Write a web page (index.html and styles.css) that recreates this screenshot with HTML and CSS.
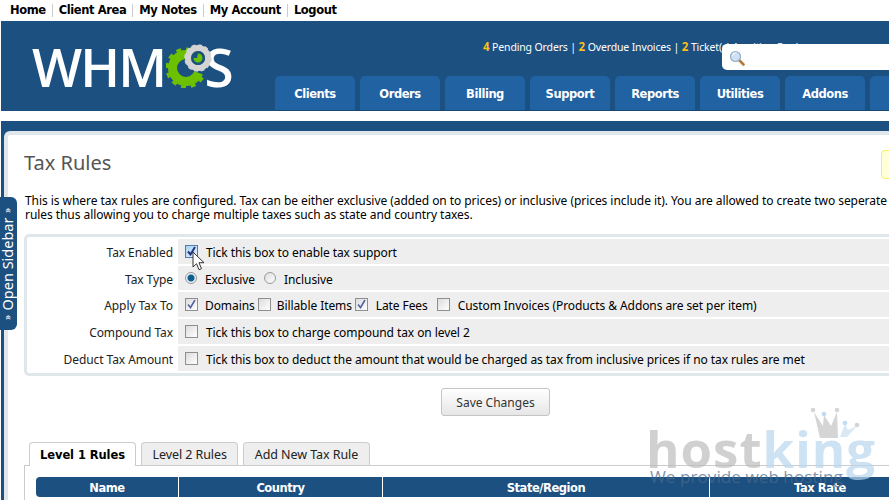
FILE: index.html
```html
<!DOCTYPE html>
<html lang="en">
<head>
<meta charset="utf-8">
<title>Tax Rules</title>
<link rel="stylesheet" href="styles.css">
</head>
<body>
<nav class="topnav">
  <a>Home</a><a>Client Area</a><a>My Notes</a><a>My Account</a><a>Logout</a>
</nav>
<header class="header">
  <div class="logo">
    <span>WHM</span>
    <svg class="gears" width="46" height="44" viewBox="0 0 46 44">
      <defs>
        <clipPath id="gap"><path d="M20 24L46 8V0H-2V46H46V34z"/></clipPath>
      </defs>
      <g clip-path="url(#gap)" fill="none" stroke="#6cc000">
        <circle cx="20" cy="24" r="13.500" stroke-width="9"/>
        <circle cx="20" cy="24" r="18" stroke-width="5" pathLength="120" stroke-dasharray="5 5"/>
      </g>
      <g fill="none">
        <circle cx="32" cy="14" r="10" stroke="#d4d4d4" stroke-width="6"/>
        <circle cx="32" cy="14" r="12" stroke="#d4d4d4" stroke-width="3.500" pathLength="120" stroke-dasharray="6 4"/>
      </g>
      <circle cx="32" cy="14" r="7" fill="#1c5081"/>
      <path fill="#6cc000" d="M27.500 14a4.500 4.500 0 1 0 4.500-4.500l-1 4.500z"/>
    </svg>
    <span>S</span>
  </div>
  <div class="header-main">
    <p class="stats"><b>4</b> Pending Orders | <b>2</b> Overdue Invoices | <b>2</b> Ticket(s) Awaiting Reply</p>
    <ul class="tabs">
      <li>Clients</li><li>Orders</li><li>Billing</li><li>Support</li><li>Reports</li><li>Utilities</li><li>Addons</li><li>Help</li>
    </ul>
  </div>
  <div class="search">
    <svg width="16" height="16" viewBox="0 0 16 16">
      <path d="M10 10l4.500 4.500" stroke="#b5793a" stroke-width="2.600" stroke-linecap="round"/>
      <circle cx="6.500" cy="6.500" r="5" fill="#cfe0f3" stroke="#93aecb" stroke-width="1.200"/>
      <path d="M3.500 6a3 3 0 0 1 3-3" stroke="#fff" fill="none"/>
    </svg>
  </div>
</header>
<div class="strip"></div>
<main class="page">
  <div class="content">
    <div class="title-row">
      <h1>Tax Rules</h1>
      <div class="notice"></div>
    </div>
    <p class="intro">This is where tax rules are configured. Tax can be either exclusive (added on to prices) or inclusive (prices include it). You are allowed to create two seperate levels of tax<br>rules thus allowing you to charge multiple taxes such as state and country taxes.</p>
    <div class="form">
      <div class="row first">
        <div class="label">Tax Enabled</div>
        <div class="field"><span class="cb on"><svg width="11" height="11" viewBox="0 0 11 11"><path d="M2 5.500l2.500 3L9 1" fill="none" stroke="#24337f" stroke-width="2"/></svg></span><span class="text">Tick this box to enable tax support</span></div>
      </div>
      <div class="row short">
        <div class="label">Tax Type</div>
        <div class="field"><span class="radio on"></span><span class="text t-excl">Exclusive</span><span class="radio"></span><span class="text">Inclusive</span></div>
      </div>
      <div class="row">
        <div class="label">Apply Tax To</div>
        <div class="field"><span class="cb"><svg width="11" height="11" viewBox="0 0 11 11"><path d="M2 5.500l2.500 3L9 1" fill="none" stroke="#5763a6" stroke-width="1.600"/></svg></span><span class="text t-dom">Domains</span><span class="cb"></span><span class="text t-bill">Billable Items</span><span class="cb"><svg width="11" height="11" viewBox="0 0 11 11"><path d="M2 5.500l2.500 3L9 1" fill="none" stroke="#5763a6" stroke-width="1.600"/></svg></span><span class="text t-late">Late Fees</span><span class="cb"></span><span class="text">Custom Invoices (Products &amp; Addons are set per item)</span></div>
      </div>
      <div class="row">
        <div class="label">Compound Tax</div>
        <div class="field"><span class="cb"></span><span class="text">Tick this box to charge compound tax on level 2</span></div>
      </div>
      <div class="row">
        <div class="label">Deduct Tax Amount</div>
        <div class="field"><span class="cb"></span><span class="text">Tick this box to deduct the amount that would be charged as tax from inclusive prices if no tax rules are met</span></div>
      </div>
    </div>
    <div class="actions"><button class="save" type="button">Save Changes</button></div>
    <div class="rule-tabs">
      <span class="rule-tab active">Level 1 Rules</span>
      <span class="rule-tab">Level 2 Rules</span>
      <span class="rule-tab">Add New Tax Rule</span>
    </div>
    <div class="tab-box">
      <div class="thead">
        <div class="th c1">Name</div>
        <div class="th c2">Country</div>
        <div class="th c3">State/Region</div>
        <div class="th c4">Tax Rate</div>
      </div>
    </div>
  </div>
</main>
<aside class="sidebar-tab"><span class="sb-label"><small>»</small>Open Sidebar<small>»</small></span></aside>
<svg class="cursor" width="14" height="21" viewBox="0 0 14 21">
  <path d="M1 1v15l3.500-3.300 2.500 6 2.500-1-2.500-6h5z" fill="#fff" stroke="#333" stroke-width="1"/>
</svg>
<div class="watermark">
  <svg class="crown" width="50" height="34" viewBox="0 0 50 34">
    <path d="M9 32L3 6l9 14 1-11 7 11 6-14 1 26z" fill="#c4c4c4"/>
    <path d="M29 31l5-13 3 6 9-4-10 11z" fill="#c9dff1"/>
    <circle cx="2" cy="4" r="2.300" fill="#c4c4c4"/>
    <circle cx="13" cy="8" r="2.300" fill="#a9cdea"/>
    <circle cx="26" cy="4" r="2.300" fill="#c4c4c4"/>
    <circle cx="34" cy="17" r="2.300" fill="#a9cdea"/>
    <circle cx="46" cy="19" r="2.300" fill="#c4c4c4"/>
  </svg>
  <div class="wm-name"><span class="wm-host">host</span><span class="wm-king">king</span></div>
  <div class="wm-tag">We provide web hosting</div>
</div>
</body>
</html>
```
FILE: styles.css
```css
* { box-sizing: border-box; }
html, body { margin: 0; padding: 0; height: 500px; overflow: hidden; background: #fff; }
body { width: 889px; font-family: "Noto Sans", "DejaVu Sans", sans-serif; font-size: 12px; letter-spacing: -0.08px; color: #000; position: relative; }

.topnav { height: 21px; display: flex; align-items: center; padding-left: 10px; font-family: "DejaVu Sans", sans-serif; font-weight: 700; font-size: 11.500px; letter-spacing: -0.4px; }
.topnav a { padding-right: 6px; margin-right: 6px; border-right: 1px solid #ccc; line-height: 13px; color: #000; }
.topnav a:last-child { border-right: 0; }

.header { margin-left: 1px; height: 90px; background: #1c5081; display: flex; position: relative; }
.logo { width: 274px; padding: 20px 0 0 31px; display: flex; align-items: flex-start; font-family: "Open Sans", sans-serif; font-weight: 600; font-size: 53px; line-height: 52px; color: #fff; letter-spacing: -1.800px; }
.gears { margin: 3px -8px 0 1px; flex: none; position: relative; }
.header-main { flex: 1; min-width: 0; display: flex; flex-direction: column; }
.stats { margin: 19px 0 0 208px; height: 36px; color: #fff; font-size: 10.500px; letter-spacing: -0.14px; line-height: 14px; white-space: nowrap; }
.stats b { color: #fdbf16; font-weight: 700; font-size: 11.500px; }
.tabs { list-style: none; margin: 0; padding: 0; display: flex; gap: 5px; height: 35px; border-bottom: 1px solid #174670; }
.tabs li { flex: none; width: 80px; height: 34px; background: #2162a3; border-radius: 5px 5px 0 0; color: #fff; font-family: "DejaVu Sans", sans-serif; font-weight: 700; font-size: 11.500px; letter-spacing: -0.45px; text-align: center; line-height: 36px; }
.search { position: absolute; left: 721px; top: 23px; width: 170px; height: 26px; background: #fff; border-radius: 5px 0 0 5px; padding: 6px 0 0 7px; }
.search svg { display: block; }

.strip { margin: 10px 0 0 1px; height: 10px; background: #1c5081; }
.page { margin-left: 1px; height: 369px; background: #1c5081; padding-left: 3px; }
.content { height: 100%; width: 900px; background: #fff; border: solid #e0e7ea; border-width: 4px 0 0 4px; border-radius: 6px 0 0 0; padding: 0 0 0 16px; }

.title-row { display: flex; height: 59px; padding-top: 15px; justify-content: space-between; }
h1 { margin: 0; font-weight: 400; font-size: 20px; line-height: 26px; color: #555; letter-spacing: 0; }
.notice { width: 20px; height: 29px; background: #ffffd9; border: 1px solid #f4ee6a; border-radius: 4px; position: relative; left: -3px; }
.intro { margin: 0; width: 880px; padding-left: 1px; line-height: 14px; white-space: nowrap; font-size: 12px; letter-spacing: -0.06px; }

.form { margin-top: 12px; width: 900px; height: 142px; border: 3px solid #e0e7ea; border-radius: 5px; padding: 2px 0 2px; }
.row { display: flex; height: 25px; margin-top: 2px; }
.row.first { margin-top: 0; }
.row.short { height: 24px; }
.label { width: 151px; padding-right: 5px; text-align: right; line-height: 27px; color: #222; }
.field { flex: 1; background: #eee; display: flex; align-items: center; padding-left: 7px; white-space: nowrap; }
.text { margin-left: 8px; margin-right: 8px; position: relative; top: 1px; }
.t-excl { margin-right: 9px; }
.t-dom { margin-left: 7px; margin-right: 3px; }
.t-bill { margin-left: 6px; width: 72px; margin-right: 6px; }
.t-late { margin-left: 8px; margin-right: 9px; }
.cb { width: 13px; height: 13px; flex: none; display: flex; align-items: center; justify-content: center; border: 1px solid #8e8f8f; background: linear-gradient(135deg, #dcdcdc, #fff); }
.cb.on { border-color: #4d7fa8; background: linear-gradient(135deg, #a9d2f3, #e4f2fc); }
.radio { width: 12px; height: 12px; flex: none; border-radius: 50%; border: 1px solid #9a9a9a; background: linear-gradient(135deg, #dcdcdc, #fff); }
.radio.on { background: radial-gradient(circle, #0e5f8f 0 3px, #eaf1f5 4px); }

.actions { margin-top: 12px; display: flex; padding-left: 417px; }
.save { width: 109px; height: 28px; font: 12px "Noto Sans", sans-serif; color: #333; border: 1px solid #c4c4c4; border-radius: 3px; background: linear-gradient(#fff, #e6e6e6); padding: 0; }

.rule-tabs { margin-top: 26px; padding-left: 5px; display: flex; gap: 5px; height: 24px; position: relative; z-index: 1; }
.rule-tab { height: 23px; padding: 0 10.500px; line-height: 24px; font-size: 12.500px; background: #eee; border: 1px solid #ccc; border-bottom: 0; border-radius: 4px 4px 0 0; color: #222; white-space: nowrap; }
.rule-tab.active { background: #fff; font-family: "DejaVu Sans", sans-serif; font-weight: 700; font-size: 11.500px; letter-spacing: -0.08px; height: 24px; color: #000; padding: 0 10px; }
.tab-box { margin-top: -1px; width: 900px; height: 60px; border: solid #ccc; border-width: 1px 0 0 1px; padding: 11px 0 0 11px; }
.thead { display: flex; gap: 1px; }
.th { flex: none; height: 20px; background: #1c5081; color: #fff; font-family: "DejaVu Sans", sans-serif; font-weight: 700; font-size: 11.500px; letter-spacing: -0.45px; text-align: center; line-height: 22px; }
.c1 { width: 142px; border-radius: 4px 0 0 4px; }
.c2 { width: 203px; }
.c3 { width: 326px; }
.c4 { width: 220px; }

.sidebar-tab { position: absolute; left: 0; top: 197px; width: 17px; height: 133px; background: #1c5081; border-radius: 0 6px 6px 0; color: #fff; }
.sb-label { position: absolute; left: 7px; top: 67px; width: 112px; display: flex; justify-content: space-between; align-items: center; transform: translate(-50%, -50%) rotate(-90deg); white-space: nowrap; font-size: 14.500px; line-height: 14px; letter-spacing: 0; }
.sb-label small { font-size: 10px; }

.cursor { position: absolute; left: 192px; top: 251px; }

.watermark { position: absolute; left: 648px; top: 406px; width: 230px; height: 92px; opacity: .7; pointer-events: none; }
.crown { position: absolute; left: 163px; top: 0; }
.wm-name { position: absolute; left: -2px; top: 12px; font-family: "Open Sans", sans-serif; font-weight: 700; font-size: 51px; line-height: 60px; letter-spacing: 1px; white-space: nowrap; }
.wm-host { color: #bdbdbd; }
.wm-king { color: #b9d6ee; }
.wm-tag { position: absolute; left: 2px; top: 61px; font-family: "Open Sans", sans-serif; font-size: 17.200px; line-height: 20px; letter-spacing: 0; color: #4a6a8c; white-space: nowrap; }
```
